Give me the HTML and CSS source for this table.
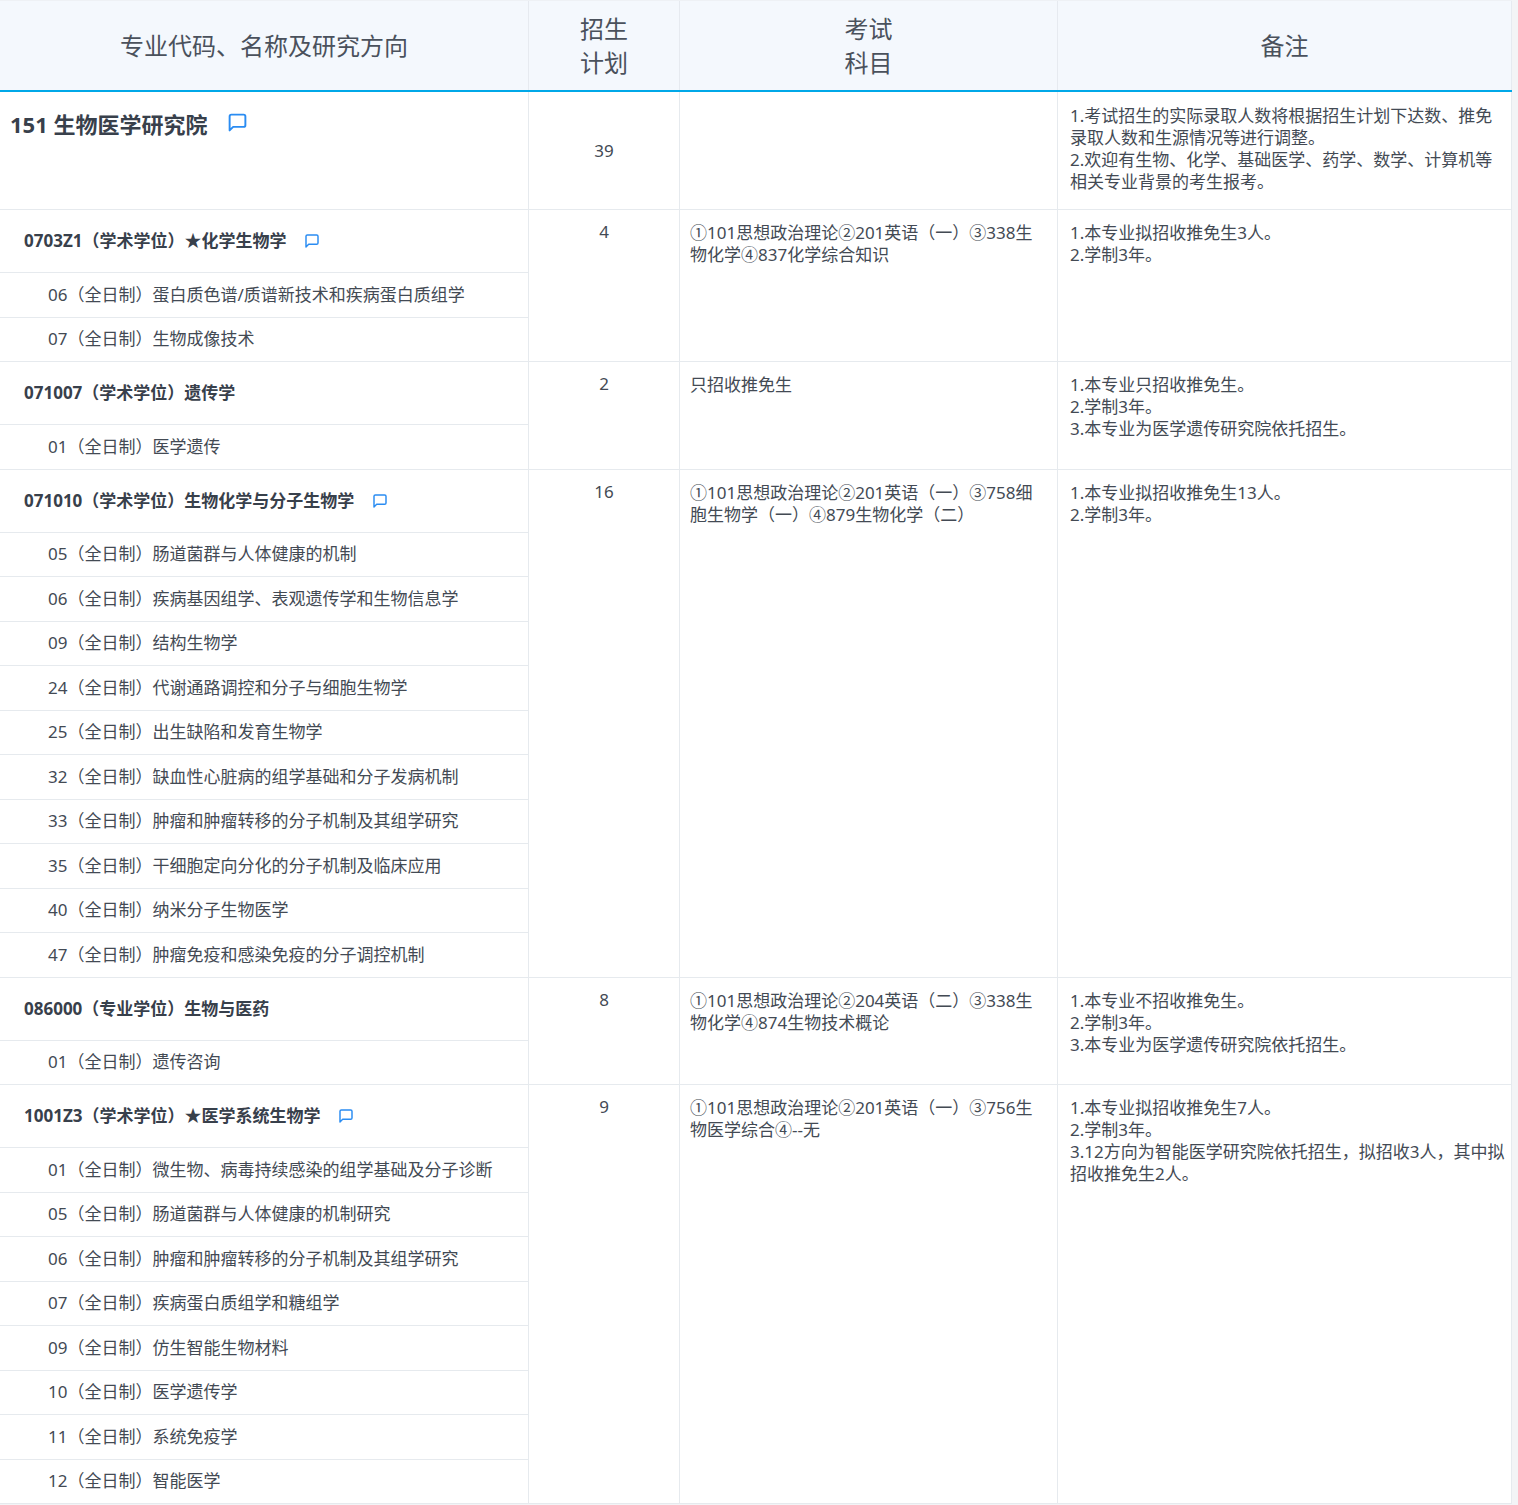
FILE: index.html
```html
<!DOCTYPE html>
<html lang="zh-CN">
<head>
<meta charset="utf-8">
<title>招生专业目录</title>
<link rel="stylesheet" href="styles.css">
</head>
<body>
<div class="table">
  <div class="thead">
    <div class="th">专业代码、名称及研究方向</div>
    <div class="th">招生<br>计划</div>
    <div class="th">考试<br>科目</div>
    <div class="th">备注</div>
  </div>

  <div class="group dept">
    <div class="cell c1"><div class="dept-title">151 生物医学研究院<svg class="ico ico-lg" viewBox="0 0 24 24"><path d="M21 15a2 2 0 0 1-2 2H7l-4 4V5a2 2 0 0 1 2-2h14a2 2 0 0 1 2 2z"/></svg></div></div>
    <div class="cell c2 mid">39</div>
    <div class="cell c3"></div>
    <div class="cell c4 first">1.考试招生的实际录取人数将根据招生计划下达数、推免录取人数和生源情况等进行调整。<br>2.欢迎有生物、化学、基础医学、药学、数学、计算机等相关专业背景的考生报考。</div>
  </div>

  <div class="group">
    <div class="cell c1 list">
      <div class="major">0703Z1（学术学位）★化学生物学<svg class="ico" viewBox="0 0 24 24"><path d="M21 15a2 2 0 0 1-2 2H7l-4 4V5a2 2 0 0 1 2-2h14a2 2 0 0 1 2 2z"/></svg></div>
      <div class="dir">06（全日制）蛋白质色谱/质谱新技术和疾病蛋白质组学</div>
      <div class="dir">07（全日制）生物成像技术</div>
    </div>
    <div class="cell c2">4</div>
    <div class="cell c3">①101思想政治理论②201英语（一）③338生物化学④837化学综合知识</div>
    <div class="cell c4">1.本专业拟招收推免生3人。<br>2.学制3年。</div>
  </div>

  <div class="group">
    <div class="cell c1 list">
      <div class="major">071007（学术学位）遗传学</div>
      <div class="dir">01（全日制）医学遗传</div>
    </div>
    <div class="cell c2">2</div>
    <div class="cell c3">只招收推免生</div>
    <div class="cell c4">1.本专业只招收推免生。<br>2.学制3年。<br>3.本专业为医学遗传研究院依托招生。</div>
  </div>

  <div class="group">
    <div class="cell c1 list">
      <div class="major">071010（学术学位）生物化学与分子生物学<svg class="ico" viewBox="0 0 24 24"><path d="M21 15a2 2 0 0 1-2 2H7l-4 4V5a2 2 0 0 1 2-2h14a2 2 0 0 1 2 2z"/></svg></div>
      <div class="dir">05（全日制）肠道菌群与人体健康的机制</div>
      <div class="dir">06（全日制）疾病基因组学、表观遗传学和生物信息学</div>
      <div class="dir">09（全日制）结构生物学</div>
      <div class="dir">24（全日制）代谢通路调控和分子与细胞生物学</div>
      <div class="dir">25（全日制）出生缺陷和发育生物学</div>
      <div class="dir">32（全日制）缺血性心脏病的组学基础和分子发病机制</div>
      <div class="dir">33（全日制）肿瘤和肿瘤转移的分子机制及其组学研究</div>
      <div class="dir">35（全日制）干细胞定向分化的分子机制及临床应用</div>
      <div class="dir">40（全日制）纳米分子生物医学</div>
      <div class="dir">47（全日制）肿瘤免疫和感染免疫的分子调控机制</div>
    </div>
    <div class="cell c2">16</div>
    <div class="cell c3">①101思想政治理论②201英语（一）③758细胞生物学（一）④879生物化学（二）</div>
    <div class="cell c4">1.本专业拟招收推免生13人。<br>2.学制3年。</div>
  </div>

  <div class="group">
    <div class="cell c1 list">
      <div class="major">086000（专业学位）生物与医药</div>
      <div class="dir">01（全日制）遗传咨询</div>
    </div>
    <div class="cell c2">8</div>
    <div class="cell c3">①101思想政治理论②204英语（二）③338生物化学④874生物技术概论</div>
    <div class="cell c4">1.本专业不招收推免生。<br>2.学制3年。<br>3.本专业为医学遗传研究院依托招生。</div>
  </div>

  <div class="group">
    <div class="cell c1 list">
      <div class="major">1001Z3（学术学位）★医学系统生物学<svg class="ico" viewBox="0 0 24 24"><path d="M21 15a2 2 0 0 1-2 2H7l-4 4V5a2 2 0 0 1 2-2h14a2 2 0 0 1 2 2z"/></svg></div>
      <div class="dir">01（全日制）微生物、病毒持续感染的组学基础及分子诊断</div>
      <div class="dir">05（全日制）肠道菌群与人体健康的机制研究</div>
      <div class="dir">06（全日制）肿瘤和肿瘤转移的分子机制及其组学研究</div>
      <div class="dir">07（全日制）疾病蛋白质组学和糖组学</div>
      <div class="dir">09（全日制）仿生智能生物材料</div>
      <div class="dir">10（全日制）医学遗传学</div>
      <div class="dir">11（全日制）系统免疫学</div>
      <div class="dir">12（全日制）智能医学</div>
    </div>
    <div class="cell c2">9</div>
    <div class="cell c3">①101思想政治理论②201英语（一）③756生物医学综合④--无</div>
    <div class="cell c4">1.本专业拟招收推免生7人。<br>2.学制3年。<br>3.12方向为智能医学研究院依托招生，拟招收3人，其中拟招收推免生2人。</div>
  </div>
</div>
</body>
</html>
```

FILE: styles.css
```css
* {
  box-sizing: border-box;
}

html, body {
  margin: 0;
  padding: 0;
}

body {
  background: #f3f4f6;
  font-family: "Noto Sans", "Noto Sans CJK SC", sans-serif;
  color: #434a54;
  font-size: 17px;
  line-height: 22px;
}

.table {
  width: 1512px;
  background: #ffffff;
}

.thead,
.group {
  display: grid;
  grid-template-columns: 529px 151px 378px 454px;
}

.thead {
  height: 92px;
  background: #f4f8fd;
  border-top: 1px solid #eef1f5;
  border-bottom: 2px solid #00a8e8;
}

.th {
  display: flex;
  align-items: center;
  justify-content: center;
  text-align: center;
  font-size: 24px;
  line-height: 34px;
  color: #4a515c;
  border-right: 1px solid #e6eaf0;
  padding-top: 1px;
}

.group {
  border-bottom: 1px solid #e6eaee;
}

.cell {
  border-right: 1px solid #e6eaee;
}

.c2 {
  text-align: center;
  padding-top: 11px;
}

.c2.mid {
  padding-top: 0;
  display: flex;
  align-items: center;
  justify-content: center;
}

.c3 {
  padding: 12px 10px 12px 10px;
}

.c4 {
  padding: 12px 3px 12px 12px;
}

.c4.first {
  padding-top: 13px;
  padding-bottom: 16px;
}

.dept-title {
  display: flex;
  align-items: center;
  padding: 17px 0 0 10px;
  font-size: 22px;
  line-height: 30px;
  font-weight: 700;
  color: #38404b;
}

.list {
  display: flex;
  flex-direction: column;
}

.major {
  height: 63px;
  display: flex;
  align-items: center;
  padding-left: 24px;
  font-weight: 700;
  color: #38404b;
  border-bottom: 1px solid #e6eaee;
}

.dir {
  height: 44.5px;
  display: flex;
  align-items: center;
  padding-left: 48px;
  border-bottom: 1px solid #e6eaee;
}

.dir:last-child {
  height: 43.5px;
  border-bottom: none;
}

.ico {
  width: 16px;
  height: 16px;
  margin-left: 18px;
  fill: none;
  stroke: #2a8cf2;
  stroke-width: 2.2;
  stroke-linejoin: round;
  flex: none;
}

.ico-lg {
  width: 21px;
  height: 21px;
  margin-left: 20px;
  margin-top: -3px;
}
```
